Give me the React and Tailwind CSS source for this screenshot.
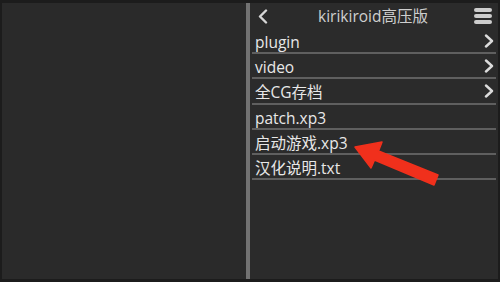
import React from 'react';

const rows = [
  { name: 'plugin', dir: true },
  { name: 'video', dir: true },
  { name: '全CG存档', dir: true },
  { name: 'patch.xp3', dir: false },
  { name: '启动游戏.xp3', dir: false },
  { name: '汉化说明.txt', dir: false },
];

const font = { fontFamily: '"Open Sans", "Noto Sans CJK SC", sans-serif' };

const ChevronRight = () => (
  <svg width="10" height="14" viewBox="0 0 10 14" fill="none">
    <path d="M2 1.5 L8 7 L2 12.5" stroke="#dcdcdc" strokeWidth="2.4" strokeLinecap="round" strokeLinejoin="round" />
  </svg>
);

const App = () => {
  return (
    <div
      className="relative w-[500px] h-[282px] flex bg-[#2b2b2b] border-t-[3px] border-b-[3px] border-l-2 border-r-[2px] border-[#1c1c1c] overflow-hidden"
      style={font}
    >
      {/* empty left pane */}
      <div className="w-[244px] h-full bg-[#2a2a2a]" />
      <div className="w-[4px] h-full bg-[#727272]" />

      {/* file browser */}
      <div className="flex-1 flex flex-col pl-[2px] pr-[2px]">
        <div className="h-[26px] flex items-center justify-between pl-[6px] pr-[4px]">
          <svg width="10" height="15" viewBox="0 0 10 15" fill="none">
            <path d="M8 1.5 L2 7.5 L8 13.5" stroke="#d6d6d6" strokeWidth="2.4" strokeLinecap="round" strokeLinejoin="round" />
          </svg>
          <span className="text-[15.5px] text-[#cfcfcf] leading-none pt-[2px] pl-[4px]">kirikiroid高压版</span>
          <div className="flex flex-col gap-[2px] w-[18px]">
            <div className="h-[4px] rounded-[2px] bg-[#cdcdcd]" />
            <div className="h-[4px] rounded-[2px] bg-[#cdcdcd]" />
            <div className="h-[4px] rounded-[2px] bg-[#cdcdcd]" />
          </div>
        </div>
        {rows.map((r) => (
          <div
            key={r.name}
            className="h-[25.2px] flex items-center justify-between pl-[3px] pr-[2px] border-b-2 border-[#5f5f5f]"
          >
            <span className="text-[15.5px] leading-[20px] text-[#e8e8e8] pt-[3px]">{r.name}</span>
            {r.dir && <ChevronRight />}
          </div>
        ))}
      </div>

      {/* red annotation arrow */}
      <svg className="absolute left-[-2px] top-[-3px]" width="500" height="282" viewBox="0 0 500 282">
        <polygon
          points="355,147 382,142 378.5,151 438,175 434,185 374.5,160 371,168"
          fill="#f0301c"
          stroke="#f0301c"
          strokeWidth="1.5"
          strokeLinejoin="round"
        />
      </svg>
    </div>
  );
};

export default App;
